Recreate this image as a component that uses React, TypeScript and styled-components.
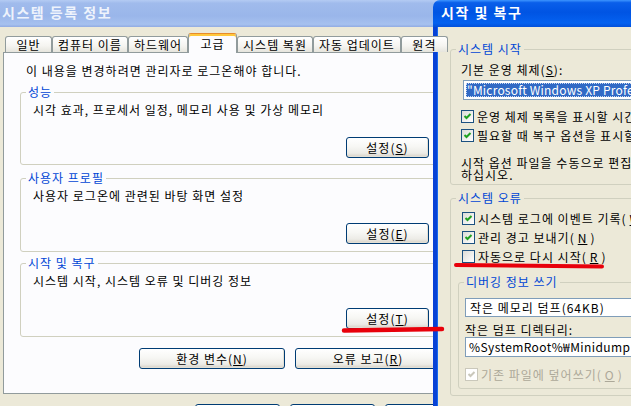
import styled, { createGlobalStyle } from "styled-components";

const GlobalStyle = createGlobalStyle`
  html, body { margin: 0; padding: 0; background: #ECE9D8; }
  body {
    font-family: "Noto Sans CJK KR", "Noto Sans", sans-serif;
    font-size: 12px;
    letter-spacing: 1px;
    color: #000;
  }
  * { box-sizing: border-box; }
`;

const Desktop = styled.div`
  position: relative;
  width: 631px;
  height: 406px;
  overflow: hidden;
  background: #ECE9D8;
`;

const Window = styled.div`
  width: 480px;
  height: 406px;
  display: flex;
  flex-direction: column;
  background: #ECE9D8;
`;

const TitleBar = styled.div<{ $active?: boolean }>`
  height: 27px;
  flex-shrink: 0;
  display: flex;
  align-items: center;
  padding: 0 0 3px ${(p) => (p.$active ? "8px" : "2px")};
  font-weight: 700;
  font-size: 14px;
  letter-spacing: 1.5px;
  white-space: nowrap;
  color: ${(p) => (p.$active ? "#ffffff" : "#EEF3FC")};
  border-top-left-radius: ${(p) => (p.$active ? "7px" : "0")};
  background: ${(p) =>
    p.$active
      ? "linear-gradient(#3D95FF 0%, #0A5FEA 10%, #0054E3 45%, #0461F0 85%, #0350DA 100%)"
      : "linear-gradient(#B4CBF3 0%, #A0BBEC 12%, #9AB6EA 60%, #A6C1EF 90%, #91ABE2 100%)"};
`;

const TabStrip = styled.div`
  display: flex;
  align-items: flex-end;
  height: 20px;
  margin-top: 6px;
  margin-bottom: -1px;
  padding-left: 5px;
  position: relative;
  z-index: 1;
`;

const Tab = styled.div<{ $selected?: boolean }>`
  height: ${(p) => (p.$selected ? "20px" : "16px")};
  margin-bottom: ${(p) => (p.$selected ? "0" : "1px")};
  min-width: ${(p) => (p.$selected ? "49px" : "47px")};
  padding: 0 5px;
  display: flex;
  align-items: center;
  justify-content: center;
  white-space: nowrap;
  line-height: 14px;
  border: 1px solid #919B9C;
  border-bottom: none;
  border-radius: 3px 3px 0 0;
  background: ${(p) =>
    p.$selected ? "#FCFCFE" : "linear-gradient(#FFFFFF, #F5F4F0 60%, #E6E5DD)"};
  box-shadow: ${(p) => (p.$selected ? "inset 0 2px 0 #FFC83C" : "none")};
  border-top-color: ${(p) => (p.$selected ? "#E68B2C" : "#919B9C")};
`;

const Panel = styled.div`
  margin-left: 3px;
  width: 455px;
  height: 342px;
  flex-shrink: 0;
  border: 1px solid #919B9C;
  background: #FCFCFE;
  padding: 11px 16px 0 16px;
  display: flex;
  flex-direction: column;
`;

const Notice = styled.div`
  line-height: 14px;
  margin-left: 6px;
  white-space: nowrap;
`;

const Group = styled.fieldset<{ $pad: string; $mt?: number }>`
  margin: ${(p) => p.$mt ?? 0}px 0 0 0;
  padding: ${(p) => p.$pad};
  border: 1px solid #D0D0BF;
  border-radius: 3px;
  min-width: 0;
`;

const Legend = styled.legend<{ $ml: number }>`
  color: #0046D5;
  padding: 0 2px;
  margin-left: ${(p) => p.$ml}px;
  line-height: 14px;
  white-space: nowrap;
`;

const Line = styled.div<{ $lh?: number }>`
  line-height: ${(p) => p.$lh ?? 14}px;
  white-space: nowrap;
`;

const ButtonRow = styled.div<{ $mt: number; $gap?: number }>`
  display: flex;
  justify-content: flex-end;
  gap: ${(p) => p.$gap ?? 10}px;
  margin-top: ${(p) => p.$mt}px;
`;

const Button = styled.button<{ $w: number }>`
  width: ${(p) => p.$w}px;
  height: 21px;
  flex-shrink: 0;
  padding: 0;
  font: inherit;
  letter-spacing: inherit;
  color: #000;
  border: 1px solid #003C74;
  border-radius: 3px;
  background: linear-gradient(#FFFFFF, #F7F7F4 45%, #ECEBE6 80%, #D6D0C5);
  box-shadow: inset -1px -1px 0 #E3E0D6;
`;

const BottomRow = styled.div`
  display: flex;
  gap: 10px;
  margin: 10px 0 0 195px;
`;

const RightWindow = styled.div`
  position: absolute;
  left: 433px;
  top: 0;
  width: 230px;
  height: 406px;
  display: flex;
  flex-direction: column;
`;

const RightBody = styled.div`
  flex: 1;
  background: #ECE9D8;
  border-left: 4px solid #0842D6;
  box-shadow: inset 1px 0 0 #166AEE;
  padding: 15px 0 0 13px;
  display: flex;
  flex-direction: column;
`;

const Combo = styled.div<{ $h?: number }>`
  height: ${(p) => p.$h ?? 20}px;
  width: 240px;
  border: 1px solid #7F9DB9;
  background: #fff;
  padding: 2px;
  display: flex;
  align-items: stretch;
  white-space: nowrap;
`;

const Selection = styled.div`
  flex: 1;
  background: #316AC5;
  color: #fff;
  letter-spacing: 0.2px;
  outline: 1px dotted #C9D8F2;
  outline-offset: -1px;
  padding-left: 1px;
  line-height: 14px;
`;

const ComboText = styled.div`
  padding-left: 2px;
  line-height: 14px;
`;

const TextBox = styled.div`
  height: 20px;
  width: 240px;
  border: 1px solid #7F9DB9;
  background: #fff;
  padding-left: 3px;
  line-height: 18px;
  letter-spacing: 0.4px;
  white-space: nowrap;
`;

const CheckRow = styled.div<{ $disabled?: boolean }>`
  height: 19px;
  display: flex;
  align-items: center;
  gap: 3px;
  white-space: nowrap;
  color: ${(p) => (p.$disabled ? "#ACA899" : "#000")};
`;

const Box = styled.span<{ $disabled?: boolean }>`
  width: 13px;
  height: 13px;
  flex-shrink: 0;
  display: inline-flex;
  border: 1px solid ${(p) => (p.$disabled ? "#CAC8BB" : "#1C5180")};
  background: ${(p) =>
    p.$disabled ? "#FFFFFF" : "linear-gradient(135deg, #DCDCD7, #FFFFFF)"};
`;

const Overlay = styled.svg`
  position: absolute;
  left: 0;
  top: 0;
  pointer-events: none;
`;

function Check({ checked, disabled }: { checked?: boolean; disabled?: boolean }) {
  return (
    <Box $disabled={disabled}>
      {checked && (
        <svg width="11" height="11" viewBox="0 0 11 11">
          <polyline
            points="2.5,5 4.5,7 8.5,3"
            fill="none"
            stroke={disabled ? "#CAC8BB" : "#21A121"}
            strokeWidth="2"
          />
        </svg>
      )}
    </Box>
  );
}

const tabs = ["일반", "컴퓨터 이름", "하드웨어", "고급", "시스템 복원", "자동 업데이트", "원격"];

export default function App() {
  return (
    <Desktop>
      <GlobalStyle />
      <Window>
        <TitleBar>시스템 등록 정보</TitleBar>
        <TabStrip>
          {tabs.map((t) => (
            <Tab key={t} $selected={t === "고급"}>
              {t}
            </Tab>
          ))}
        </TabStrip>
        <Panel>
          <Notice>이 내용을 변경하려면 관리자로 로그온해야 합니다.</Notice>
          <Group $pad="4px 11px 6px 12px" $mt={7}>
            <Legend $ml={-7}>성능</Legend>
            <Line>시각 효과, 프로세서 일정, 메모리 사용 및 가상 메모리</Line>
            <ButtonRow $mt={20}>
              <Button $w={83}>
                설정(<u>S</u>)
              </Button>
            </ButtonRow>
          </Group>
          <Group $pad="4px 11px 7px 12px" $mt={6}>
            <Legend $ml={-7}>사용자 프로필</Legend>
            <Line>사용자 로그온에 관련된 바탕 화면 설정</Line>
            <ButtonRow $mt={20}>
              <Button $w={83}>
                설정(<u>E</u>)
              </Button>
            </ButtonRow>
          </Group>
          <Group $pad="4px 11px 7px 12px" $mt={4}>
            <Legend $ml={-7}>시작 및 복구</Legend>
            <Line>시스템 시작, 시스템 오류 및 디버깅 정보</Line>
            <ButtonRow $mt={20}>
              <Button $w={83}>
                설정(<u>T</u>)
              </Button>
            </ButtonRow>
          </Group>
          <ButtonRow $mt={11}>
            <Button $w={146}>
              환경 변수(<u>N</u>)
            </Button>
            <Button $w={146}>
              오류 보고(<u>R</u>)
            </Button>
          </ButtonRow>
        </Panel>
        <BottomRow>
          <Button $w={85}>확인</Button>
          <Button $w={85}>취소</Button>
          <Button $w={85}>적용(A)</Button>
        </BottomRow>
      </Window>

      <RightWindow>
        <TitleBar $active>시작 및 복구</TitleBar>
        <RightBody>
          <Group $pad="7px 0 3px 10px">
            <Legend $ml={-5}>시스템 시작</Legend>
            <Line>
              기본 운영 체제(<u>S</u>):
            </Line>
            <Combo style={{ marginTop: 3, marginLeft: 2 }}>
              <Selection>"Microsoft Windows XP Professional" /noexecute=optin /fastdetect</Selection>
            </Combo>
            <div style={{ marginTop: 7 }}>
              <CheckRow>
                <Check checked />
                운영 체제 목록을 표시할 시간(<u>T</u>):
              </CheckRow>
              <CheckRow>
                <Check checked />
                필요할 때 복구 옵션을 표시할 시간(<u>D</u>):
              </CheckRow>
            </div>
            <div style={{ marginTop: 12 }}>
              <Line $lh={12}>시작 옵션 파일을 수동으로 편집하려면 [편집]을 클릭</Line>
              <Line $lh={12}>하십시오.</Line>
            </div>
          </Group>
          <Group $pad="4px 0 6px 11px" $mt={6}>
            <Legend $ml={-6}>시스템 오류</Legend>
            <CheckRow>
              <Check checked />
              시스템 로그에 이벤트 기록(<u>W</u>)
            </CheckRow>
            <CheckRow>
              <Check checked />
              관리 경고 보내기(<u>N</u>)
            </CheckRow>
            <CheckRow>
              <Check />
              자동으로 다시 시작(<u>R</u>)
            </CheckRow>
            <Group $pad="9px 0 4px 6px" $mt={9} style={{ marginLeft: -4 }}>
              <Legend $ml={-1}>디버깅 정보 쓰기</Legend>
              <Combo $h={19}>
                <ComboText>작은 메모리 덤프(64KB)</ComboText>
              </Combo>
              <Line $lh={12} style={{ marginTop: 7 }}>
                작은 덤프 디렉터리:
              </Line>
              <TextBox style={{ marginTop: 1 }}>%SystemRoot%₩Minidump</TextBox>
              <CheckRow $disabled style={{ marginTop: 8 }}>
                <Check checked disabled />
                기존 파일에 덮어쓰기(<u>O</u>)
              </CheckRow>
            </Group>
          </Group>
        </RightBody>
      </RightWindow>

      <Overlay width="631" height="406">
        <line x1="456" y1="265" x2="602" y2="266.5" stroke="#E8000B" strokeWidth="4" strokeLinecap="round" />
        <line x1="344" y1="330.5" x2="442" y2="329" stroke="#E8000B" strokeWidth="4.5" strokeLinecap="round" />
      </Overlay>
    </Desktop>
  );
}
